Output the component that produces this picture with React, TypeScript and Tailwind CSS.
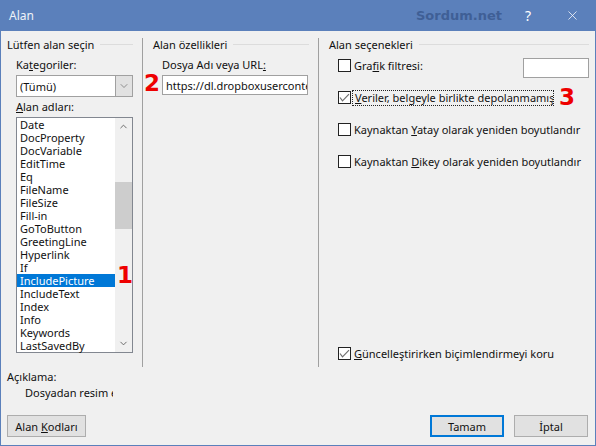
import { ChevronDown, ChevronUp, X } from "lucide-react";

const fields = ["Date", "DocProperty", "DocVariable", "EditTime", "Eq", "FileName", "FileSize", "Fill-in", "GoToButton", "GreetingLine", "Hyperlink", "If", "IncludePicture", "IncludeText", "Index", "Info", "Keywords", "LastSavedBy"];

function GroupTitle({ text }: { text: string }) {
  return (
    <div className="flex items-center gap-[6px] h-[13px]">
      <span className="whitespace-nowrap">{text}</span>
      <div className="flex-1 h-px bg-[#dcdcdc]" />
    </div>
  );
}

function CheckRow({ checked, className, children }: { checked?: boolean; className?: string; children: React.ReactNode }) {
  return (
    <div className={`flex items-center h-[15px] whitespace-nowrap ${className ?? ""}`}>
      <div className="w-[13px] h-[13px] border border-[#222222] bg-white shrink-0 mr-[3px]">
        {checked && (
          <svg width="11" height="11" viewBox="0 0 11 11" fill="none" stroke="#707070" strokeWidth="1.2">
            <polyline points="1,5.5 3.5,8.8 10,2.2" />
          </svg>
        )}
      </div>
      <span>{children}</span>
    </div>
  );
}

function Button({ className, children }: { className?: string; children: React.ReactNode }) {
  return <div className={`h-[22px] flex items-center justify-center bg-[#e1e1e1] ${className ?? ""}`}>{children}</div>;
}

export default function App() {
  return (
    <div className="w-[596px] h-[446px] flex flex-col bg-[#f0f0f0] border-x border-b border-[#5b80bb] text-[11px] leading-[13px] text-[#111111] font-['Noto_Sans',sans-serif] overflow-hidden">
      {/* Title bar */}
      <div className="h-[31px] shrink-0 -mx-px bg-[#5b80bb] flex items-center text-white">
        <span className="ml-[9px] text-[12px] text-[#eef2f8]">Alan</span>
        <span className="ml-auto font-['DejaVu_Sans',sans-serif] font-bold text-[13px] text-[#3f5f96]">Sordum.net</span>
        <span className="ml-[21px] w-[10px] text-center text-[14px]">?</span>
        <X size={15} strokeWidth={1.2} className="ml-[32px] mr-[16px]" />
      </div>

      {/* Columns */}
      <div className="flex mt-[7px] h-[329px]">
        {/* Left */}
        <div className="relative w-[135px] ml-[6px] pr-[9px] shrink-0">
          <GroupTitle text="Lütfen alan seçin" />
          <div className="ml-[9px]">
            <div className="mt-[7px] h-[15px]">Ka<u>t</u>egoriler:</div>
            <div className="mt-[2px] h-[22px] border border-[#a0a0a0] bg-white flex items-center pl-[3px]">
              <span className="flex-1">(Tümü)</span>
              <div className="w-[17px] h-[20px] bg-[#e1e1e1] border-l border-[#a0a0a0] flex items-center justify-center">
                <ChevronDown size={12} strokeWidth={1.2} className="text-[#555555]" />
              </div>
            </div>
            <div className="mt-[3px] h-[17px]"><u>A</u>lan adları:</div>
            <div className="h-[236px] border border-[#828790] bg-white flex">
              <div className="flex-1">
                {fields.map((f) => (
                  <div key={f} className={`h-[13px] pl-[3px] flex items-center ${f === "IncludePicture" ? "bg-[#0078d7] text-white" : ""}`}>
                    {f}
                  </div>
                ))}
              </div>
              <div className="w-[17px] flex flex-col items-center bg-[#f0f0f0]">
                <ChevronUp size={11} strokeWidth={2} className="mt-[3px] text-[#606060]" />
                <div className="w-full h-[47px] mt-[50px] bg-[#cdcdcd]" />
                <ChevronDown size={11} strokeWidth={2} className="mt-auto mb-[3px] text-[#606060]" />
              </div>
            </div>
          </div>
          <span className="absolute left-[110px] top-[225px] font-['DejaVu_Sans',sans-serif] font-bold text-[23px] leading-[24px] text-[#ee0000]">1</span>
        </div>

        {/* Middle */}
        <div className="relative w-[176px] border-l border-[#a0a0a0] pl-[10px] pr-[9px] shrink-0">
          <GroupTitle text="Alan özellikleri" />
          <div className="ml-[9px]">
            <div className="mt-[7px] h-[15px]">Dosya Adı veya URL<u>:</u></div>
            <div className="mt-[2px] w-[146px] h-[20px] border border-[#a0a0a0] bg-white flex items-center pl-[3px] overflow-hidden whitespace-nowrap">
              https://dl.dropboxusercontent.com
            </div>
          </div>
          <span className="absolute left-[1px] top-[33px] font-['DejaVu_Sans',sans-serif] font-bold text-[23px] leading-[24px] text-[#ee0000]">2</span>
        </div>

        {/* Right */}
        <div className="relative flex-1 min-w-0 flex flex-col border-l border-[#a0a0a0] pl-[10px] pr-[6px]">
          <GroupTitle text="Alan seçenekleri" />
          <div className="ml-[9px] flex flex-col flex-1">
            <div className="flex items-start justify-between mt-[7px] h-[20px]">
              <CheckRow className="mt-[0px]">Gra<u>f</u>ik filtresi:</CheckRow>
              <div className="w-[66px] h-[20px] shrink-0 border border-[#a0a0a0] bg-white" />
            </div>
            <CheckRow checked className="mt-[12px]">
              <span className="block w-[202px] h-[16px] ml-[-2px] pl-[2px] border border-dotted border-[#222222] overflow-hidden leading-[14px]">
                <u>V</u>eriler, belgeyle birlikte depolanmamış resim
              </span>
            </CheckRow>
            <CheckRow className="mt-[17px]">Kaynaktan <u>Y</u>atay olarak yeniden boyutlandır</CheckRow>
            <CheckRow className="mt-[17px]">Kaynaktan <u>D</u>ikey olarak yeniden boyutlandır</CheckRow>
            <CheckRow checked className="mt-[177px]"><u>G</u>üncelleştirirken biçimlendirmeyi koru</CheckRow>
          </div>
          <span className="absolute left-[240px] top-[47px] font-['DejaVu_Sans',sans-serif] font-bold text-[23px] leading-[24px] text-[#ee0000]">3</span>
        </div>
      </div>

      {/* Description */}
      <div className="ml-[6px] mt-[3px] h-[15px]">Açıklama:</div>
      <div className="ml-[24px] mt-[1px] w-[88px] h-[15px] overflow-hidden whitespace-nowrap">Dosyadan resim ekler</div>

      {/* Buttons */}
      <div className="flex ml-[6px] mr-[7px] mt-[14px]">
        <Button className="w-[79px] border border-[#adadad]"><span>Alan <u>K</u>odları</span></Button>
        <Button className="w-[74px] ml-auto mr-[0px] border-2 border-[#0078d7]">Tamam</Button>
        <Button className="w-[74px] ml-[10px] border border-[#adadad]">İptal</Button>
      </div>
    </div>
  );
}
